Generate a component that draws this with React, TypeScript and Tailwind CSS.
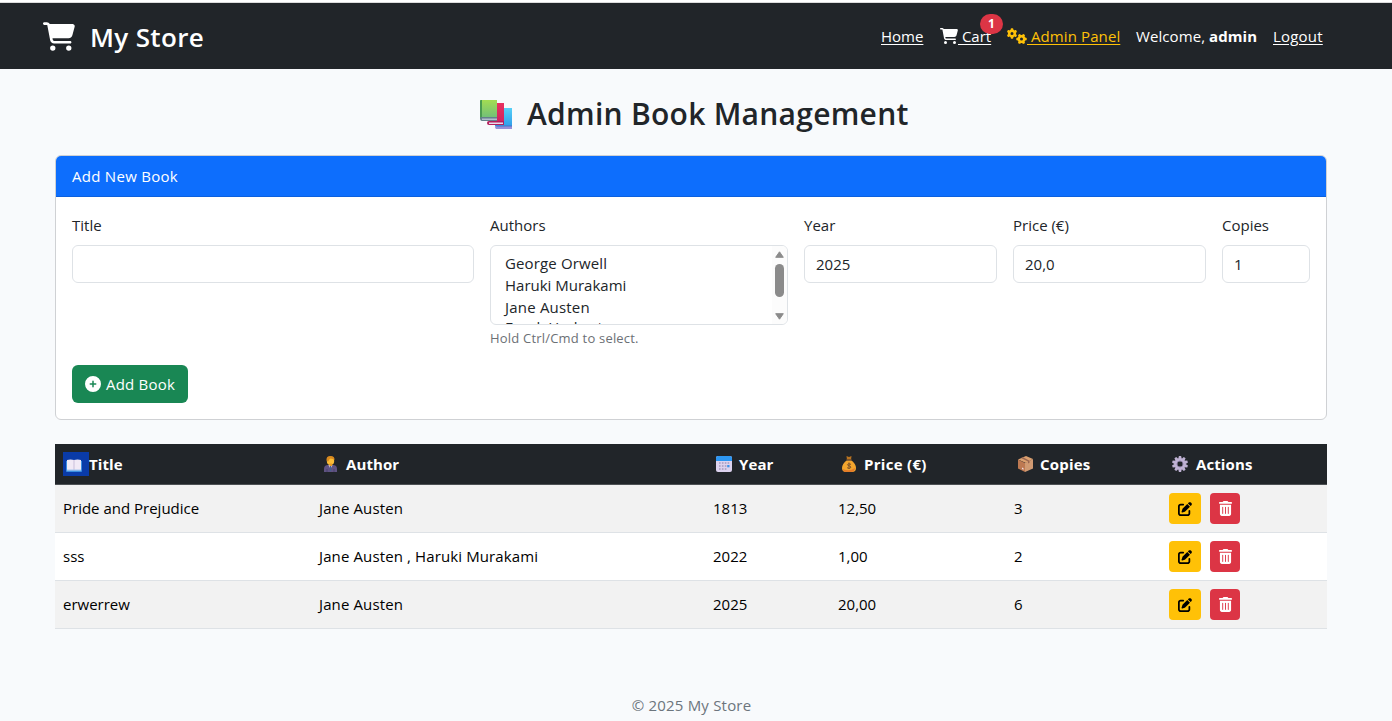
import React from "react";
import { FaCartShopping, FaGears, FaCirclePlus, FaPenToSquare, FaTrashCan } from "react-icons/fa6";

function Books() {
  return (
    <svg className="mt-[2px]" width="32" height="30" viewBox="0 0 32 30">
      <defs>
        <linearGradient id="bg" x1="0" y1="0" x2="0" y2="1"><stop offset="0" stopColor="#a3dc52" /><stop offset="1" stopColor="#6dbd7c" /></linearGradient>
        <linearGradient id="bb" x1="0" y1="0" x2="0" y2="1"><stop offset="0" stopColor="#57d0f7" /><stop offset="1" stopColor="#2f9eea" /></linearGradient>
        <linearGradient id="br" x1="0" y1="0" x2="0" y2="1"><stop offset="0" stopColor="#e8315f" /><stop offset="1" stopColor="#d0225f" /></linearGradient>
      </defs>
      <path d="M17 8h15v18H15z" fill="url(#bb)" />
      <path d="M15 27l2-1h15v3H16q-1-1-1-2z" fill="#9790d8" />
      <path d="M15 25.500h17v1H15z" fill="#4272c9" />
      <path d="M9 3h15v19H9z" fill="url(#br)" />
      <path d="M7 23q0-2 2-2h15v4H9q-2 0-2-2z" fill="#b51e5d" />
      <path d="M9 22.500h14v1.500H9z" fill="#e7ddec" />
      <path d="M1 0h16v19H0V1q0-1 1-1z" fill="url(#bg)" />
      <path d="M0 1q0-1 1-1h1v19H0z" fill="#4a9b51" />
      <path d="M0 18q0-1 2-1h15v4H2q-2 0-2-3z" fill="#64808c" />
      <path d="M2 18.500h15V20H2z" fill="#b3bccf" />
    </svg>
  );
}

function OpenBook() {
  return (
    <svg width="16" height="13" viewBox="0 0 16 13">
      <path d="M0 2h16v10q0 1-1 1H1q-1 0-1-1z" fill="#3b8fe0" />
      <path d="M1 1q3.500-1 7 0 3.500-1 7 0v10H1z" fill="#f1eaf6" />
      <path d="M8 1v10" stroke="#c9bfda" strokeWidth="1" />
      <path d="M1 10.500h14v1.200H1z" fill="#a9c8ee" />
    </svg>
  );
}

function Person() {
  return (
    <svg width="13" height="16" viewBox="0 0 13 16">
      <path d="M0 16v-3q0-4 4-4h5q4 0 4 4v3z" fill="#5f5382" />
      <path d="M4.500 9h4l-2 4z" fill="#d9d3e6" />
      <path d="M6.500 10v5" stroke="#42608f" strokeWidth="1.200" />
      <path d="M3 16v-3M10 16v-3" stroke="#433a64" strokeWidth=".7" />
      <ellipse cx="6.500" cy="4.800" rx="3.700" ry="4.300" fill="#fbbd36" />
      <path d="M2.500 4Q2.200 0 6.500 0t4 4q-1.500-1.500-4-1.500-1.500.5-2 2.500Q3.500 6.500 2.500 4z" fill="#d98a1f" />
      <path d="M5.500 7.500h2.500V10H5.500z" fill="#e89825" />
    </svg>
  );
}

function Calendar() {
  return (
    <svg width="16" height="16" viewBox="0 0 16 16">
      <rect width="16" height="16" rx="2" fill="#dcd2ee" />
      <path d="M2 0h12q2 0 2 2v3H0V2q0-2 2-2z" fill="#2d97f2" />
      <path d="M3 6.200h1.600v1.600H3zM5.900 6.200h1.600v1.600H5.900zM8.800 6.200h1.600v1.600H8.800zM11.600 6.200h1.600v1.600h-1.600zM3 9.200h1.600v1.600H3zM5.900 9.200h1.600v1.600H5.900zM8.800 9.200h1.600v1.600H8.800zM3 12.200h1.600v1.600H3zM5.900 12.200h1.600v1.600H5.900zM8.800 12.200h1.600v1.600H8.800z" fill="#a499bd" />
      <path d="M11.200 9h2.300v2.300h-2.300z" fill="#3f92e8" />
    </svg>
  );
}

function MoneyBag() {
  return (
    <svg width="14" height="16" viewBox="0 0 14 16">
      <path d="M4.500 0l2.500 1L9.500 0 9 4H5z" fill="#b97420" />
      <path d="M5 4h4q5 4 5 8 0 4-4 4H4q-4 0-4-4 0-4 5-8z" fill="#f2a52d" />
      <path d="M1 13q6 3 12-1-.5 4-4 4H4q-3 0-3-3z" fill="#e47c28" />
      <path d="M4 4h6" stroke="#5f432d" strokeWidth="1.300" />
      <path d="M9 8.300q-3.500-1.200-3.500.5c0 1.500 3.300.6 3.300 2.300 0 1.500-2.300 1.500-3.700.6M7 6.500v6.500" stroke="#79502a" strokeWidth="1" fill="none" />
    </svg>
  );
}

function Package() {
  return (
    <svg width="15" height="16" viewBox="0 0 15 16">
      <path d="M0 3.500L8 0l7 3-7 4z" fill="#dba06f" />
      <path d="M0 3.500L7 7v9l-7-3.500z" fill="#bd7952" />
      <path d="M7 7l8-4v9.500L7 16z" fill="#d09a72" />
      <path d="M3 2l7 3.500v2l1.500-.8V4.700L5 1.200z" fill="#9a6650" />
      <path d="M4 11.500l1.500.8v1.500L4 13z" fill="#f0dce4" />
    </svg>
  );
}

function Gear() {
  const teeth = [0, 36, 72, 108, 144, 180, 216, 252, 288, 324];
  return (
    <svg width="16" height="16" viewBox="0 0 16 16">
      {teeth.map((a) => (
        <path key={a} d="M6.900 0h2.200l.7 3H6.200z" fill="#bfb2d3" transform={`rotate(${a} 8 8)`} />
      ))}
      <circle cx="8" cy="8" r="4.300" fill="none" stroke="#c0b3d5" strokeWidth="3" />
      <circle cx="8" cy="8" r="3" fill="none" stroke="#85799c" strokeWidth=".8" />
    </svg>
  );
}

const rows = [
  { title: "Pride and Prejudice", author: "Jane Austen", year: "1813", price: "12,50", copies: "3" },
  { title: "sss", author: "Jane Austen , Haruki Murakami", year: "2022", price: "1,00", copies: "2" },
  { title: "erwerrew", author: "Jane Austen", year: "2025", price: "20,00", copies: "6" },
];

const grid = "grid grid-cols-[256px_394px_125px_176px_155px_166px]";
const field = "flex h-[38px] items-center rounded-md border border-[#dee2e6] bg-white px-[11px]";

export default function App() {
  return (
    <div className="flex h-[721px] w-[1392px] flex-col overflow-hidden whitespace-nowrap bg-[#f8fafc] font-['Open_Sans','Noto_Sans',sans-serif] text-[15px] leading-6 text-[#212529]">
      <div className="h-[3px] shrink-0 border-b border-[#dcdcdc] bg-white" />
      <header className="flex h-[66px] shrink-0 items-center justify-between bg-[#212529] pl-[43px] pr-[69px] text-white">
        <div className="flex items-center gap-[15px]">
          <FaCartShopping className="h-[29px] w-8" />
          <span className="pt-px text-[26px] font-semibold leading-8 tracking-[0.35px]">My Store</span>
        </div>
        <nav className="flex items-center gap-4">
          <a className="w-[43px] underline underline-offset-2">Home</a>
          <a className="relative flex w-[51px] items-center">
            <FaCartShopping className="h-4 w-[18px] shrink-0" />
            <span className="whitespace-pre underline underline-offset-2"> Cart</span>
            <span className="absolute left-10 top-[-10px] flex h-5 w-[23px] items-center justify-center rounded-full bg-[#dc3545] text-xs font-bold">1</span>
          </a>
          <a className="flex w-[113px] items-center text-[#ffc107]">
            <FaGears className="h-4 w-5 shrink-0" />
            <span className="whitespace-pre tracking-[0.1px] underline underline-offset-2"> Admin Panel</span>
          </a>
          <span className="w-[121px] tracking-[0.08px]">Welcome, <b>admin</b></span>
          <a className="w-[50px] tracking-[0.2px] underline underline-offset-2">Logout</a>
        </nav>
      </header>

      <main className="flex flex-col px-[55px]">
        <div className="flex h-[86px] items-center gap-[15px] pl-[425px] pt-1">
          <Books />
          <h1 className="text-[30px] font-semibold leading-10 tracking-[0.27px]">Admin Book Management</h1>
        </div>

        <section className="flex h-[265px] w-[1272px] flex-col overflow-hidden rounded-md border border-[#cfd1d4] bg-white">
          <div className="h-[41px] shrink-0 border-b border-[#0c60dd] bg-[#0d6efd] px-4 py-2 tracking-[0.28px] text-white">Add New Book</div>
          <div className="flex gap-4 px-4 pt-4">
            <label className="flex w-[402px] flex-col gap-2">
              <span>Title</span>
              <span className={field} />
            </label>
            <div className="flex w-[298px] flex-col">
              <span className="mb-2">Authors</span>
              <div className="flex h-20 justify-between overflow-hidden rounded-md border border-[#dee2e6]">
                <div className="pl-[14px] pt-[6px] leading-[22px]">
                  <div className="tracking-[0.14px]">George Orwell</div>
                  <div>Haruki Murakami</div>
                  <div className="tracking-[0.2px]">Jane Austen</div>
                  <div className="leading-[18px]">Frank Herbert</div>
                </div>
                <div className="flex w-[15px] flex-col items-center bg-[#fcfcfc] pt-[5px]">
                  <svg width="9" height="7" viewBox="0 0 9 7"><path d="M4.500.8L8.300 6.300H.7z" fill="#8b8b8b" stroke="#8b8b8b" strokeLinejoin="round" /></svg>
                  <div className="mt-[6px] h-[33px] w-[9px] rounded-full bg-[#8b8b8b]" />
                  <svg className="mt-4" width="9" height="7" viewBox="0 0 9 7"><path d="M4.500 6.200L8.300.7H.7z" fill="#8b8b8b" stroke="#8b8b8b" strokeLinejoin="round" /></svg>
                </div>
              </div>
              <span className="mb-px mt-[3px] text-[13px] leading-[21px] tracking-[0.2px] text-[#6c7075]">Hold Ctrl/Cmd to select.</span>
            </div>
            <label className="flex w-[193px] flex-col gap-2">
              <span>Year</span>
              <span className={field}>2025</span>
            </label>
            <label className="flex w-[193px] flex-col gap-2">
              <span>Price (€)</span>
              <span className={field}>20,0</span>
            </label>
            <label className="flex w-[88px] flex-col gap-2">
              <span>Copies</span>
              <span className={field}>1</span>
            </label>
          </div>
          <button className="ml-4 mt-[15px] flex h-[38px] w-[116px] items-center gap-[5px] rounded-md bg-[#198754] pl-[12px] text-white">
            <FaCirclePlus className="ml-px h-4 w-4 shrink-0" />
            <span className="tracking-[0.22px]">Add Book</span>
          </button>
        </section>

        <section className="mt-6 w-[1272px] text-black">
          <div className={`${grid} h-[41px] items-center border-b border-[#4d5154] bg-[#212529] font-bold tracking-[0.1px] text-white`}>
            <div className="flex items-center pl-2">
              <span className="flex h-6 w-[26px] items-center bg-[#0a3ba8] pl-[3px] pt-[3px]"><OpenBook /></span>Title
            </div>
            <div className="flex items-center gap-[9px] pl-[13px]"><Person />Author</div>
            <div className="flex items-center gap-[7px] pl-[11px]"><Calendar />Year</div>
            <div className="flex items-center gap-2 pl-3 tracking-[0.3px]"><MoneyBag />Price (€)</div>
            <div className="flex items-center gap-[7px] pl-3 tracking-[0.2px]"><Package />Copies</div>
            <div className="flex items-center gap-2 pl-[11px]"><Gear />Actions</div>
          </div>
          {rows.map((r) => (
            <div key={r.title} className={`${grid} h-12 items-center border-b border-[#dee2e6] odd:bg-white even:bg-[#f2f2f2]`}>
              <div className="pb-[2px] pl-2">{r.title}</div>
              <div className="pb-[2px] pl-2 tracking-[0.12px]">{r.author}</div>
              <div className="pb-[2px] pl-2">{r.year}</div>
              <div className="pb-[2px] pl-2">{r.price}</div>
              <div className="pb-[2px] pl-2">{r.copies}</div>
              <div className="flex gap-[9px] pl-2">
                <button className="flex h-[31px] w-8 items-center justify-center rounded bg-[#ffc107]"><FaPenToSquare className="h-[14px] w-[14px]" /></button>
                <button className="flex h-[31px] w-[30px] items-center justify-center rounded bg-[#dc3545] text-white"><FaTrashCan className="h-[15px] w-[13px]" /></button>
              </div>
            </div>
          ))}
        </section>
      </main>
      <footer className="mt-16 pr-[9px] text-center tracking-[0.2px] text-[#6c757d]">© 2025 My Store</footer>
    </div>
  );
}
